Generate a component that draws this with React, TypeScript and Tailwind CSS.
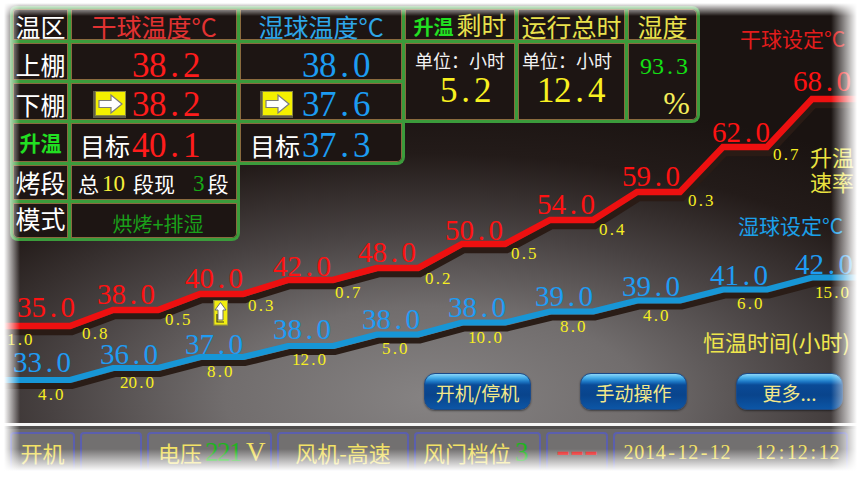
import React from "react";

const SERIF = "font-['Liberation_Serif',serif]";

function Num({ t, w, className = "" }: { t: string; w: string; className?: string }) {
  return (
    <span className={`inline-flex leading-none ${SERIF} ${className}`}>
      {t.split("").map((ch, i) => (
        <span key={i} className={`inline-block text-center ${w}`}>
          {ch}
        </span>
      ))}
    </span>
  );
}

function RightArrow() {
  return (
    <svg width="33" height="27" viewBox="0 0 33 27" className="shrink-0">
      <rect x="0" y="0" width="33" height="27" fill="#5f5c46" />
      <rect x="2.5" y="0.5" width="30" height="24" fill="#f4f000" stroke="#8a8740" strokeWidth="1" />
      <polygon
        points="6,9.5 18,9.5 18,4 29,13 18,22 18,16.5 6,16.5"
        fill="#ffffff"
        stroke="#7c7c7c"
        strokeWidth="1.2"
        strokeLinejoin="miter"
      />
    </svg>
  );
}

function UpArrow() {
  return (
    <svg width="15" height="26" viewBox="0 0 15 26">
      <rect x="0" y="0" width="15" height="26" fill="#6a6850" />
      <rect x="1" y="0.5" width="13.5" height="24.5" fill="#f2ee10" stroke="#9a9640" strokeWidth="1" />
      <polygon points="7.5,2.5 13,10 10,10 10,20 5,20 5,10 2,10" fill="#ffffff" stroke="#6e6e6e" strokeWidth="1" />
      <polyline points="4,14 4,22 11,22" fill="none" stroke="#3a3a2a" strokeWidth="1.2" />
    </svg>
  );
}

const FL: [number, number][] = [
  [-10, 70],
  [113, 158],
  [200, 243],
  [288, 333],
  [377, 418],
  [462, 505],
  [550, 593],
  [637, 680],
  [723, 767],
  [812, 880],
];
const RY = [326, 310, 294, 280, 268, 244, 220, 192, 147, 99];
const BY = [380, 368, 357, 346, 334.5, 322.5, 311.5, 300.5, 289.5, 277.5];

const pts = (ys: number[], dx = 0, dy = 0) =>
  FL.flatMap(([a, b], i) => [`${a + dx},${ys[i] + dy}`, `${b + dx},${ys[i] + dy}`]).join(" ");

const RED_VALS: [number, number, string][] = [
  [17, 298, "35.0"],
  [97, 285, "38.0"],
  [185, 269, "40.0"],
  [273, 257, "42.0"],
  [358, 243, "48.0"],
  [445, 221, "50.0"],
  [537, 195, "54.0"],
  [622, 167, "59.0"],
  [712, 123, "62.0"],
  [793, 72, "68.0"],
];
const BLUE_VALS: [number, number, string][] = [
  [13, 353, "33.0"],
  [100, 345, "36.0"],
  [185, 335, "37.0"],
  [273, 320, "38.0"],
  [362, 310, "38.0"],
  [448, 298, "38.0"],
  [535, 287, "39.0"],
  [622, 277, "39.0"],
  [710, 266, "41.0"],
  [795, 255, "42.0"],
];
const RED_RATES: [number, number, string][] = [
  [7, 334, "1.0"],
  [82, 328, "0.8"],
  [165, 314, "0.5"],
  [248, 300, "0.3"],
  [335, 287, "0.7"],
  [425, 273, "0.2"],
  [511, 248, "0.5"],
  [599, 224, "0.4"],
  [688, 195, "0.3"],
  [773, 149, "0.7"],
];
const BLUE_RATES: [number, number, string][] = [
  [38, 389, "4.0"],
  [120, 377, "20.0"],
  [207, 366, "8.0"],
  [292, 354, "12.0"],
  [382, 343, "5.0"],
  [468, 332, "10.0"],
  [560, 321, "8.0"],
  [643, 310, "4.0"],
  [737, 298, "6.0"],
  [815, 287, "15.0"],
];

function Chart() {
  return (
    <>
      <svg className="absolute left-0 top-0" width="865" height="423" viewBox="0 0 865 423">
        <polyline points={pts(RY, 2, 6)} fill="none" stroke="#2a1b15" strokeWidth="6.5" strokeLinejoin="miter" />
        <polyline points={pts(RY)} fill="none" stroke="#ee1010" strokeWidth="6.5" strokeLinejoin="miter" />
        <polyline points={pts(BY, 2, 6)} fill="none" stroke="#2a1d17" strokeWidth="6" strokeLinejoin="miter" />
        <polyline points={pts(BY)} fill="none" stroke="#1796d6" strokeWidth="6" strokeLinejoin="miter" />
      </svg>
      {RED_VALS.map(([x, y, t], i) => (
        <div key={"rv" + i} className="absolute flex text-[29px] leading-none text-[#ff1212]" style={{ left: x, top: y - 5 }}>
          <Num t={t} w="w-[14.5px]" />
        </div>
      ))}
      {BLUE_VALS.map(([x, y, t], i) => (
        <div key={"bv" + i} className="absolute flex text-[29px] leading-none text-[#1e9cf4]" style={{ left: x, top: y - 5 }}>
          <Num t={t} w="w-[14.5px]" />
        </div>
      ))}
      {RED_RATES.map(([x, y, t], i) => (
        <div key={"rr" + i} className="absolute flex text-[17px] leading-none text-[#f6ee22]" style={{ left: x, top: y - 3 }}>
          <Num t={t} w="w-[8.5px]" />
        </div>
      ))}
      {BLUE_RATES.map(([x, y, t], i) => (
        <div key={"br" + i} className="absolute flex text-[17px] leading-none text-[#f6ee22]" style={{ left: x, top: y - 3 }}>
          <Num t={t} w="w-[8.5px]" />
        </div>
      ))}
      <div className="absolute left-[213px] top-[300px] flex">
        <UpArrow />
      </div>
      <div className="absolute left-[740px] top-[28px] whitespace-nowrap text-[21px] leading-none text-[#e21c1c]">
        干球设定°C
      </div>
      <div className="absolute left-[810px] top-[144px] whitespace-nowrap text-[22px] leading-[25px] text-[#ebe340]">
        升温
        <br />
        速率
      </div>
      <div className="absolute left-[738px] top-[215px] whitespace-nowrap text-[21px] leading-none text-[#1ba0ea]">
        湿球设定°C
      </div>
      <div className="absolute left-[703px] top-[330px] whitespace-nowrap text-[22px] leading-none text-[#efe64c]">
        恒温时间(小时)
      </div>
    </>
  );
}

const CELL =
  "border-r-[3px] border-b-[3px] border-[#3b9b3b] bg-[#1d1513] shadow-[inset_0_0_0_1px_#8a6a3e]";

function Table() {
  return (
    <div className="ml-[10px] mt-[6px] grid w-max grid-cols-[61px_169px_165px_113px_110px_72px] grid-rows-[37px_40px_40px_42px_38px_38px] leading-none">
      {/* header row */}
      <div className={`${CELL} col-start-1 row-start-1 flex items-center justify-center rounded-tl-[6px] border-l-[3px] border-t-[3px] pt-[4px] text-[25px] text-white`}>
        温区
      </div>
      <div className={`${CELL} col-start-2 row-start-1 flex items-center justify-center border-t-[3px] pt-[4px] text-[25px] text-[#e23232]`}>
        干球温度°C
      </div>
      <div className={`${CELL} col-start-3 row-start-1 flex items-center justify-center border-t-[3px] pt-[4px] text-[25px] text-[#2ea6e8]`}>
        湿球温度°C
      </div>
      <div className={`${CELL} col-start-4 row-start-1 flex items-end justify-center border-t-[3px] pb-[3px]`}>
        <span className="text-[20px] font-bold text-[#22e022]">升温</span>
        <span className="ml-[3px] text-[25px] text-[#e9e14c]">剩时</span>
      </div>
      <div className={`${CELL} col-start-5 row-start-1 flex items-center justify-center border-t-[3px] pt-[4px] text-[25px] text-[#e9e14c]`}>
        运行总时
      </div>
      <div className={`${CELL} col-start-6 row-start-1 flex items-center justify-center rounded-tr-[8px] border-t-[3px] pt-[4px] text-[25px] text-[#e9e14c]`}>
        湿度
      </div>

      {/* 上棚 */}
      <div className={`${CELL} col-start-1 row-start-2 flex items-center justify-center border-l-[3px] pt-[6px] text-[25px] text-white`}>
        上棚
      </div>
      <div className={`${CELL} col-start-2 row-start-2 flex items-center pl-[61px] pt-[7px]`}>
        <Num t="38.2" w="w-[17px]" className="text-[35px] text-[#ff1c1c]" />
      </div>
      <div className={`${CELL} col-start-3 row-start-2 flex items-center pl-[62px] pt-[7px]`}>
        <Num t="38.0" w="w-[17px]" className="text-[35px] text-[#1c9cf2]" />
      </div>

      {/* right block spanning 上棚/下棚 */}
      <div className={`${CELL} col-start-4 row-start-2 row-span-2 flex flex-col pt-[8px]`}>
        <div className="pl-[10px] text-[18px] text-[#f2f2f2]">单位：小时</div>
        <div className="mt-[4px] flex pl-[35px]">
          <Num t="5.2" w="w-[17px]" className="text-[35px] text-[#f8f020]" />
        </div>
      </div>
      <div className={`${CELL} col-start-5 row-start-2 row-span-2 flex flex-col pt-[8px]`}>
        <div className="pl-[4px] text-[18px] text-[#f2f2f2]">单位：小时</div>
        <div className="mt-[4px] flex pl-[19px]">
          <Num t="12.4" w="w-[17px]" className="text-[35px] text-[#f8f020]" />
        </div>
      </div>
      <div className={`${CELL} col-start-6 row-start-2 row-span-2 flex flex-col rounded-br-[8px] pt-[11px]`}>
        <div className="flex pl-[12px]">
          <Num t="93.3" w="w-[12px]" className="text-[24px] text-[#14e014]" />
        </div>
        <div className={`mt-[9px] self-end pr-[7px] text-[32px] ${SERIF} text-[#f4ec5a]`}>%</div>
      </div>

      {/* 下棚 */}
      <div className={`${CELL} col-start-1 row-start-3 flex items-center justify-center border-l-[3px] pt-[6px] text-[25px] text-white`}>
        下棚
      </div>
      <div className={`${CELL} col-start-2 row-start-3 flex items-center gap-[6px] pl-[22px] pt-[5px]`}>
        <RightArrow />
        <Num t="38.2" w="w-[17px]" className="text-[35px] text-[#ff1c1c]" />
      </div>
      <div className={`${CELL} col-start-3 row-start-3 flex items-center gap-[9px] pl-[20px] pt-[5px]`}>
        <RightArrow />
        <Num t="37.6" w="w-[17px]" className="text-[35px] text-[#1c9cf2]" />
      </div>

      {/* 升温 */}
      <div className={`${CELL} col-start-1 row-start-4 flex items-center justify-center border-l-[3px] text-[21px] font-bold text-[#22e022]`}>
        升温
      </div>
      <div className={`${CELL} col-start-2 row-start-4 flex items-center gap-[2px] pl-[9px] pt-[6px]`}>
        <span className="text-[25px] text-white">目标</span>
        <Num t="40.1" w="w-[17px]" className="text-[35px] text-[#ff1c1c]" />
      </div>
      <div className={`${CELL} col-start-3 row-start-4 flex items-center gap-[2px] rounded-br-[8px] pl-[10px] pt-[6px]`}>
        <span className="text-[25px] text-white">目标</span>
        <Num t="37.3" w="w-[17px]" className="text-[35px] text-[#1c9cf2]" />
      </div>

      {/* 烤段 */}
      <div className={`${CELL} col-start-1 row-start-5 flex items-center justify-center border-l-[3px] text-[25px] text-white`}>
        烤段
      </div>
      <div className={`${CELL} col-start-2 row-start-5 flex items-center pl-[7px] pt-[2px]`}>
        <span className="text-[21px] text-white">总</span>
        <Num t="10" w="w-[11.5px]" className="ml-[3px] text-[23px] text-[#f6ee3a]" />
        <span className="ml-[8px] text-[21px] text-white">段现</span>
        <Num t="3" w="w-[11.5px]" className="ml-[18px] text-[23px] text-[#16a816]" />
        <span className="ml-[3px] text-[21px] text-white">段</span>
      </div>

      {/* 模式 */}
      <div className={`${CELL} col-start-1 row-start-6 flex items-center justify-center rounded-bl-[8px] border-l-[3px] pb-[4px] text-[25px] text-white`}>
        模式
      </div>
      <div className={`${CELL} col-start-2 row-start-6 flex items-end justify-center rounded-br-[8px] pb-[4px] pl-[8px] text-[20px] text-[#1aa01a]`}>
        烘烤+排湿
      </div>
    </div>
  );
}

function Btn({ children }: { children: React.ReactNode }) {
  return (
    <div className="flex h-[37px] w-[107px] items-center justify-center rounded-[11px] border border-[#1b4a88] bg-[linear-gradient(to_bottom,#8ad6f8_0px,#43ace8_4px,#1a72c0_8px,#0a4a96_11px,#09448c_60%,#0c56a6_100%)] pt-[2px] text-[19px] leading-none text-[#f3e88a] shadow-[0_1px_2px_rgba(0,0,0,0.45)]">
      {children}
    </div>
  );
}

const BOX =
  "flex h-[40px] shrink-0 items-center rounded-[4px] border-2 border-[#5b5fae] bg-[#727070] text-[22px] leading-none text-[#f2e266]";

export default function App() {
  return (
    <div className="relative h-[479px] w-[865px] overflow-hidden bg-[#6b6969] font-['Noto_Sans_CJK_SC',sans-serif]">
      <div className="relative h-[423px] bg-[radial-gradient(ellipse_80%_72%_at_50%_94%,#868383_0%,#716d6d_30%,#484242_55%,#231b19_80%,#1a1311_100%)]">
        <Chart />
        <div className="relative flex h-full flex-col">
          <Table />
          <div className="mt-auto flex justify-end gap-[49px] pb-[13px] pr-[22px]">
            <Btn>开机/停机</Btn>
            <Btn>手动操作</Btn>
            <Btn>更多...</Btn>
          </div>
        </div>
      </div>
      <div className="h-[3px] bg-[#f5f5f5]" />
      <div className="h-[3px] bg-[#4e4c4c]" />
      <div className="flex gap-[5px] pl-[10px] pt-[3px]">
        <div className={`${BOX} w-[65px] justify-center`}>开机</div>
        <div className={`${BOX} w-[62px]`} />
        <div className={`${BOX} w-[125px] justify-center`}>
          <span>电压</span>
          <Num t="221" w="w-[12px]" className="ml-[3px] text-[27px] text-[#1fb41f]" />
          <Num t="V" w="w-[15px]" className="ml-[5px] text-[27px]" />
        </div>
        <div className={`${BOX} w-[132px] justify-center`}>风机-高速</div>
        <div className={`${BOX} w-[127px] pl-[7px]`}>
          <span>风门档位</span>
          <Num t="3" w="w-[12px]" className="ml-[4px] text-[27px] text-[#1fb41f]" />
        </div>
        <div className={`${BOX} w-[62px] justify-center`}>
          <span className="inline-block scale-x-[1.5] font-['Liberation_Sans',sans-serif] text-[28px] font-bold text-[#e62020]">
            ---
          </span>
        </div>
        <div className={`${BOX} w-[235px] pl-[8px]`}>
          <Num t="2014-12-12" w="w-[10.8px]" className="text-[20px]" />
          <Num t="12:12:12" w="w-[10.6px]" className="ml-[24px] text-[20px]" />
        </div>
      </div>
      <div className="pointer-events-none absolute inset-0 bg-[linear-gradient(to_right,#fff_0px,#fff_4px,rgba(255,255,255,0)_20px),linear-gradient(to_left,#fff_0px,#fff_8px,rgba(255,255,255,0)_34px),linear-gradient(to_bottom,#fff_0px,#fff_3px,rgba(255,255,255,0)_16px),linear-gradient(to_top,#fff_0px,#fff_8px,rgba(255,255,255,0)_30px)]" />
    </div>
  );
}
